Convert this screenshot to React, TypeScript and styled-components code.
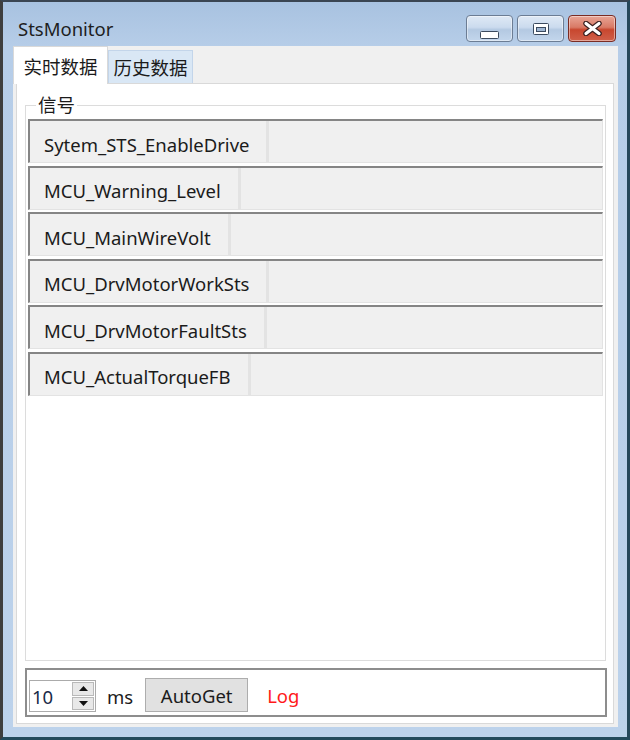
import React from 'react';
import styled, { createGlobalStyle } from 'styled-components';

const Global = createGlobalStyle`
  html, body { margin: 0; padding: 0; background: #3b3b3b; }
  body { font-family: "Noto Sans", "Noto Sans CJK SC", sans-serif; color: #1b1b1b; }
  * { box-sizing: border-box; }
`;

const Window = styled.div`
  width: 630px;
  height: 740px;
  display: flex;
  flex-direction: column;
  border-style: solid;
  border-color: #3a4552 #25475a #234a5c #3e3e3e;
  border-width: 2px 3px 3px 3px;
  background: linear-gradient(to bottom, #a8c2e0 0px, #b6cde8 44px, #bcd2eb 100%);
  padding: 0 9px 10px 10px;
`;

const TitleBar = styled.div`
  height: 44px;
  display: flex;
  align-items: flex-start;
  flex: none;
`;

const Title = styled.div`
  margin: 16px 0 0 5px;
  font-size: 18.5px;
  line-height: 22px;
  color: #1e1e1e;
`;

const CaptionGroup = styled.div`
  margin: 13px 2px 0 auto;
  display: flex;
  gap: 4px;
`;

const CaptionButton = styled.div<{ $close?: boolean; $w: number }>`
  width: ${(p) => p.$w}px;
  height: 27px;
  border-radius: 4px;
  border: 1px solid ${(p) => (p.$close ? '#7a2c24' : '#6c7d94')};
  background: ${(p) =>
    p.$close
      ? 'linear-gradient(to bottom, #e8a596 0%, #d97a66 45%, #c8472f 55%, #d0604a 100%)'
      : 'linear-gradient(to bottom, #dfe9f5 0%, #cbdbee 45%, #b4c9e2 55%, #c3d6ec 100%)'};
  box-shadow: inset 0 0 0 1px rgba(255, 255, 255, 0.45);
  display: flex;
  align-items: center;
  justify-content: center;
`;

const Client = styled.div`
  flex: 1;
  background: #f0f0f0;
  display: flex;
  flex-direction: column;
  min-height: 0;
`;

const TabStrip = styled.div`
  height: 37px;
  display: flex;
  align-items: flex-end;
  flex: none;
`;

const Tab = styled.div<{ $active?: boolean }>`
  position: relative;
  z-index: ${(p) => (p.$active ? 1 : 0)};
  width: ${(p) => (p.$active ? 95 : 85)}px;
  height: ${(p) => (p.$active ? 38 : 33)}px;
  margin-bottom: ${(p) => (p.$active ? -1 : 0)}px;
  background: ${(p) => (p.$active ? '#ffffff' : '#d9e7f5')};
  border: 1px solid ${(p) => (p.$active ? '#d9d9d9' : '#c3d5ea')};
  border-bottom: none;
  display: flex;
  align-items: center;
  justify-content: center;
  font-size: 18.5px;
  color: #1b1b1b;
`;

const Page = styled.div`
  flex: 1;
  margin: 0 4px 3px 3px;
  background: #ffffff;
  border: 1px solid #d9d9d9;
  display: flex;
  flex-direction: column;
  min-height: 0;
`;

const Group = styled.fieldset`
  flex: 1;
  min-height: 0;
  margin: 10px 7px 0 8px;
  border: 1px solid #dcdcdc;
  padding: 0 2px;
`;

const Legend = styled.legend`
  margin-left: 8px;
  padding: 0 2px;
  font-size: 18.5px;
  line-height: 22px;
  color: #1b1b1b;
`;

const RowList = styled.div`
  padding-top: 3px;
  display: flex;
  flex-direction: column;
  gap: 2.6px;
`;

const Row = styled.div`
  height: 44px;
  display: flex;
  background: #f0f0f0;
  border-top: 2px solid #858585;
  border-left: 2px solid #858585;
  border-right: 1px solid #e3e3e3;
  border-bottom: 1px solid #e3e3e3;
`;

const RowLabel = styled.div`
  display: flex;
  align-items: center;
  padding: 5px 17px 0 14px;
  border-right: 3px solid #e3e3e3;
  font-size: 18.5px;
  color: #1b1b1b;
  white-space: nowrap;
`;

const Panel = styled.div`
  flex: none;
  height: 49px;
  margin: 7px 6px 6px 8px;
  border: 2px solid #8d8d8d;
  display: flex;
  align-items: flex-end;
  padding: 0 0 3px 2px;
`;

const Numeric = styled.div`
  width: 67px;
  height: 32px;
  border: 1px solid #ababab;
  display: flex;
  align-items: stretch;
`;

const NumText = styled.div`
  flex: 1;
  padding-left: 2px;
  display: flex;
  align-items: center;
  font-size: 18.5px;
  color: #1a2a48;
`;

const Spin = styled.div`
  width: 22px;
  margin: 1px 1px 1px 0;
  display: flex;
  flex-direction: column;
  gap: 1px;
`;

const SpinButton = styled.div`
  flex: 1;
  background: #e8e8e8;
  border: 1px solid #b9b9b9;
  display: flex;
  align-items: center;
  justify-content: center;
`;

const Unit = styled.div`
  margin-left: 11px;
  height: 32px;
  display: flex;
  align-items: center;
  font-size: 18.5px;
`;

const Button = styled.div`
  margin-left: 12px;
  width: 103px;
  height: 34px;
  background: #e1e1e1;
  border: 1px solid #adadad;
  display: flex;
  align-items: center;
  justify-content: center;
  font-size: 18.5px;
  color: #1b1b1b;
`;

const LogLink = styled.div<{ $color: string }>`
  margin-left: 19px;
  height: 34px;
  display: flex;
  align-items: center;
  font-size: 18.5px;
  color: ${(p) => p.$color};
`;

const signals = [
  'Sytem_STS_EnableDrive',
  'MCU_Warning_Level',
  'MCU_MainWireVolt',
  'MCU_DrvMotorWorkSts',
  'MCU_DrvMotorFaultSts',
  'MCU_ActualTorqueFB',
];

const MinIcon = () => (
  <svg width="19" height="8" viewBox="0 0 19 8" style={{ marginTop: 12 }}>
    <rect x="0.5" y="0.5" width="18" height="7" rx="1" fill="#ffffff" stroke="#3b4a5e" />
  </svg>
);

const MaxIcon = () => (
  <svg width="16" height="12" viewBox="0 0 16 12">
    <rect x="0.5" y="0.5" width="15" height="11" rx="1" fill="#ffffff" stroke="#3b4a5e" />
    <rect x="3.5" y="4.5" width="9" height="4" fill="#9fb6d2" stroke="#3b4a5e" />
  </svg>
);

const CloseIcon = () => (
  <svg width="19" height="15" viewBox="0 0 19 15">
    <path d="M3 2.5 L16 12.5 M16 2.5 L3 12.5" stroke="#3a2020" strokeWidth="5.5" strokeLinecap="round" />
    <path d="M3 2.5 L16 12.5 M16 2.5 L3 12.5" stroke="#ffffff" strokeWidth="3.2" strokeLinecap="round" />
  </svg>
);

const Tri = ({ up }: { up?: boolean }) => (
  <svg width="9" height="5" viewBox="0 0 9 5">
    <path d={up ? 'M0 5 L4.5 0 L9 5 Z' : 'M0 0 L9 0 L4.5 5 Z'} fill="#111" />
  </svg>
);

export default function App() {
  return (
    <>
      <Global />
      <Window>
        <TitleBar>
          <Title>StsMonitor</Title>
          <CaptionGroup>
            <CaptionButton $w={47}>
              <MinIcon />
            </CaptionButton>
            <CaptionButton $w={47}>
              <MaxIcon />
            </CaptionButton>
            <CaptionButton $w={48} $close>
              <CloseIcon />
            </CaptionButton>
          </CaptionGroup>
        </TitleBar>
        <Client>
          <TabStrip>
            <Tab $active>实时数据</Tab>
            <Tab>历史数据</Tab>
          </TabStrip>
          <Page>
            <Group>
              <Legend>信号</Legend>
              <RowList>
                {signals.map((s) => (
                  <Row key={s}>
                    <RowLabel>{s}</RowLabel>
                  </Row>
                ))}
              </RowList>
            </Group>
            <Panel>
              <Numeric>
                <NumText>10</NumText>
                <Spin>
                  <SpinButton>
                    <Tri up />
                  </SpinButton>
                  <SpinButton>
                    <Tri />
                  </SpinButton>
                </Spin>
              </Numeric>
              <Unit>ms</Unit>
              <Button>AutoGet</Button>
              <LogLink $color="#ff1a1a">Log</LogLink>
            </Panel>
          </Page>
        </Client>
      </Window>
    </>
  );
}
